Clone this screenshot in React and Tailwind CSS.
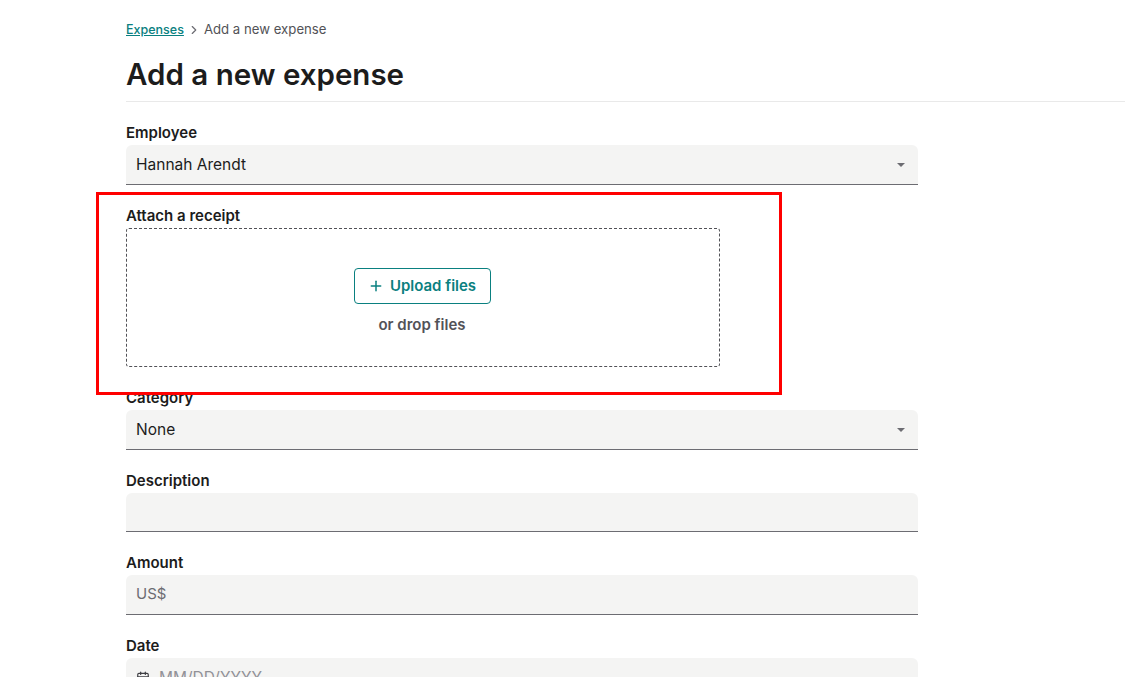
import { Plus, ChevronRight, Calendar } from "lucide-react";

function Label({ children }) {
  return <div className="h-[18px] mb-1 text-[15px] leading-[20px] font-semibold text-[#1c1c1c]">{children}</div>;
}

function SelectField({ value }) {
  return (
    <div className="flex items-center justify-between h-10 pl-[10px] pr-[13px] bg-[#f4f4f3] rounded-t-md border-b border-[#6c6c72] text-[15.5px] text-[#1c1c1c]">
      <span>{value}</span>
      <span className="w-0 h-0 border-x-[4px] border-x-transparent border-t-[4px] border-t-[#6c6c72]" />
    </div>
  );
}

export default function App() {
  return (
    <div className="relative h-[677px] overflow-hidden bg-white pl-[126px] font-['Inter',sans-serif] text-[#1c1c1c]">
      <div className="flex items-center h-5 mt-[20px] text-[13.2px] text-[#525257]">
        <a className="text-[12.5px] font-medium text-[#0a8080] underline">Expenses</a>
        <ChevronRight className="w-3.5 h-3.5 mx-[3px] text-[#6c6c72]" strokeWidth={2} />
        <span>Add a new expense</span>
      </div>
      <h1 className="mt-[15px] h-[37px] text-[29.5px] leading-[38px] font-semibold">Add a new expense</h1>
      <div className="mt-[9px] border-b border-[#e9e9e9]" />

      <div className="mt-[21px] w-[792px] flex flex-col gap-[21px]">
        <div>
          <Label>Employee</Label>
          <SelectField value="Hannah Arendt" />
        </div>

        <div>
          <Label>Attach a receipt</Label>
          <div className="w-[594px] h-[139px] flex flex-col items-center border border-dashed border-[#525257] rounded-[3px]">
            <button className="mt-[39px] mr-[2px] flex items-center justify-center gap-[6px] w-[137px] h-9 border border-[#0a8080] rounded text-[15px] font-semibold text-[#0a8080]">
              <Plus className="w-4 h-4" strokeWidth={2.25} />
              Upload files
            </button>
            <div className="mt-[10px] mr-[2px] text-[15px] font-semibold text-[#525257]">or drop files</div>
          </div>
        </div>

        <div>
          <Label>Category</Label>
          <SelectField value="None" />
        </div>

        <div>
          <Label>Description</Label>
          <div className="h-[39px] bg-[#f4f4f3] rounded-t-md border-b border-[#6c6c72]" />
        </div>

        <div>
          <Label>Amount</Label>
          <div className="flex items-center h-10 pl-[10px] bg-[#f4f4f3] rounded-t-md border-b border-[#6c6c72] text-[15px] text-[#6c6c72]">
            US$
          </div>
        </div>

        <div>
          <Label>Date</Label>
          <div className="flex items-center gap-[9px] h-10 pl-[10px] bg-[#f4f4f3] rounded-t-md border-b border-[#6c6c72] text-[15.5px] text-[#919197]">
            <Calendar className="w-[14px] h-[14px] text-[#3f3f44]" strokeWidth={2} />
            MM/DD/YYYY
          </div>
        </div>
      </div>

      <div className="absolute left-[96px] top-[192px] w-[686px] h-[203px] border-[3px] border-[#ff0000] pointer-events-none" />
    </div>
  );
}
